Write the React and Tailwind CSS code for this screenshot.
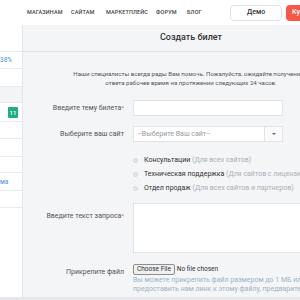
import React from 'react';

const navItems = [
  ['МАГАЗИНАМ', 'w-[44px]'],
  ['САЙТАМ', 'w-[35px]'],
  ['МАРКЕТПЛЕЙС', 'w-[50px]'],
  ['ФОРУМ', 'w-[31px]'],
  ['БЛОГ', 'w-[20px]'],
];

const radios = [
  ['Консультации', '(Для всех сайтов)'],
  ['Техническая поддержка', '(Для сайтов с лицензией)'],
  ['Отдел продаж', '(Для всех сайтов и партнеров)'],
];

function Label({ children, required }) {
  return (
    <div className="w-[101px] shrink-0 text-right text-[7px] text-[#555]">
      {children}
      {required && <span className="text-[#e74c3c] align-top text-[6px]">*</span>}
    </div>
  );
}

export default function App() {
  return (
    <div
      className="w-[300px] h-[300px] overflow-hidden bg-white flex flex-col"
      style={{ fontFamily: 'Roboto, "Noto Sans", sans-serif' }}
    >
      {/* top nav */}
      <div className="h-[25px] shrink-0 flex items-center bg-white">
        <nav className="w-[230px] shrink-0 pl-[27px] flex justify-start text-[5.5px] font-medium text-[#444] whitespace-nowrap tracking-[0.15px]">
          {navItems.map(([item, w]) => (
            <span key={item} className={`${w} shrink-0`}>{item}</span>
          ))}
        </nav>
        <button className="shrink-0 w-[52px] h-[16px] border border-[#e2e2e2] rounded-sm bg-white text-[7px] font-medium text-[#333]">
          Демо
        </button>
        <button className="ml-[4px] shrink-0 w-[60px] h-[16px] rounded-sm bg-gradient-to-r from-[#f75a4a] to-[#f2402f] text-[7px] font-medium text-white text-left pl-[6px]">
          Купить
        </button>
      </div>

      <div className="flex flex-1 min-h-0">
        {/* sidebar */}
        <aside className="w-[23px] shrink-0 border-r border-[#e4e7ea] bg-white flex flex-col text-[6.5px]">
          <div className="h-[27px] border-b border-[#e8ebee]" />
          <div className="h-[17px] border-b border-[#e8ebee] flex items-center pt-[2px] text-[#4a90d9]">38%</div>
          <div className="h-[18px] border-b border-[#e8ebee]" />
          <div className="h-[16px] bg-[#f2f4f6] border-b border-[#e8ebee]" />
          <div className="h-[19px] border-b border-[#e8ebee] flex items-center pl-[8px]">
            <span className="w-[10px] h-[11px] bg-[#1fae80] text-white text-[6px] font-medium flex items-center justify-center rounded-[1px]">
              11
            </span>
          </div>
          <div className="h-[17px] border-b border-[#e8ebee]" />
          <div className="h-[18px] border-b border-[#e8ebee]" />
          <div className="h-[16px] border-b border-[#e8ebee]" />
          <div className="h-[18px] border-b border-[#e8ebee] flex items-center pt-[2px] text-[#4a90d9]">ма</div>
          <div className="h-[17px] border-b border-[#e8ebee]" />
          <div className="flex-1" />
          <div className="h-[3px] bg-[#e6e8eb]" />
        </aside>

        {/* main panel */}
        <main className="w-[336px] shrink-0 bg-[#f3f5f7] flex flex-col">
          <div className="h-[27px] shrink-0 border-b border-[#e2e6ea] flex items-center justify-center text-[9px] font-medium text-[#333]">
            Создать билет
          </div>

          <p className="pt-[17px] text-center text-[6.1px] leading-[9px] text-[#555] whitespace-nowrap">
            Наши специалисты всегда рады Вам помочь. Пожалуйста, ожидайте получения в
            <br />
            ответа рабочее время на протяжении следующих 24 часов.
          </p>

          <div className="mt-[13px] flex items-center gap-[9px]">
            <Label required>Введите тему билета</Label>
            <div className="w-[150px] h-[16px] bg-white border border-[#e2e5e8]" />
          </div>

          <div className="mt-[10px] flex items-center gap-[9px]">
            <Label>Выберите ваш сайт</Label>
            <div className="w-[150px] h-[16px] bg-white border border-[#e2e5e8] flex">
              <div className="flex-1 flex items-center pl-[4px] text-[7px] text-[#999]">
                --Выберите Ваш сайт--
              </div>
              <div className="w-[18px] border-l border-[#e2e5e8] bg-[#fafafa] flex items-center justify-center">
                <span className="w-0 h-0 border-l-[2px] border-r-[2px] border-t-[2.5px] border-l-transparent border-r-transparent border-t-[#666]" />
              </div>
            </div>
          </div>

          <div className="mt-[14px] ml-[110px] flex flex-col gap-[6px]">
            {radios.map(([name, note]) => (
              <div key={name} className="flex items-center gap-[6px] text-[7px] leading-[8px] whitespace-nowrap">
                <span className="w-[5px] h-[5px] rounded-full bg-[#e4e6e9] border border-[#d6d9dc]" />
                <span className="text-[#333]">
                  {name} <span className="text-[#a9b0b8]">{note}</span>
                </span>
              </div>
            ))}
          </div>

          <div className="mt-[11px] flex items-start gap-[9px]">
            <div className="pt-[8px]">
              <Label required>Введите текст запроса</Label>
            </div>
            <div className="w-[175px] h-[50px] bg-white border border-[#e2e5e8]" />
          </div>

          <div className="mt-[11px] flex items-start gap-[9px]">
            <div className="pt-[3px]">
              <Label>Прикрепите файл</Label>
            </div>
            <div className="flex flex-col">
              <div className="flex items-center gap-[2px] text-[6.5px] text-[#333]">
                <span className="h-[11px] px-[3px] flex items-center bg-[#efefef] border border-[#8f8f8f] rounded-[2px]">
                  Choose File
                </span>
                <span>No file chosen</span>
              </div>
              <p className="mt-[1px] text-[7px] leading-[9px] text-[#9fb3c6] whitespace-nowrap">
                Вы можете прикрепить файл размером до 1 МБ или
                <br />
                предоставить нам линк к этому файлу, предварительно загрузив его
              </p>
            </div>
          </div>
          <div className="flex-1" />
          <div className="h-[3px] bg-[#e6e8eb]" />
        </main>
      </div>
    </div>
  );
}
